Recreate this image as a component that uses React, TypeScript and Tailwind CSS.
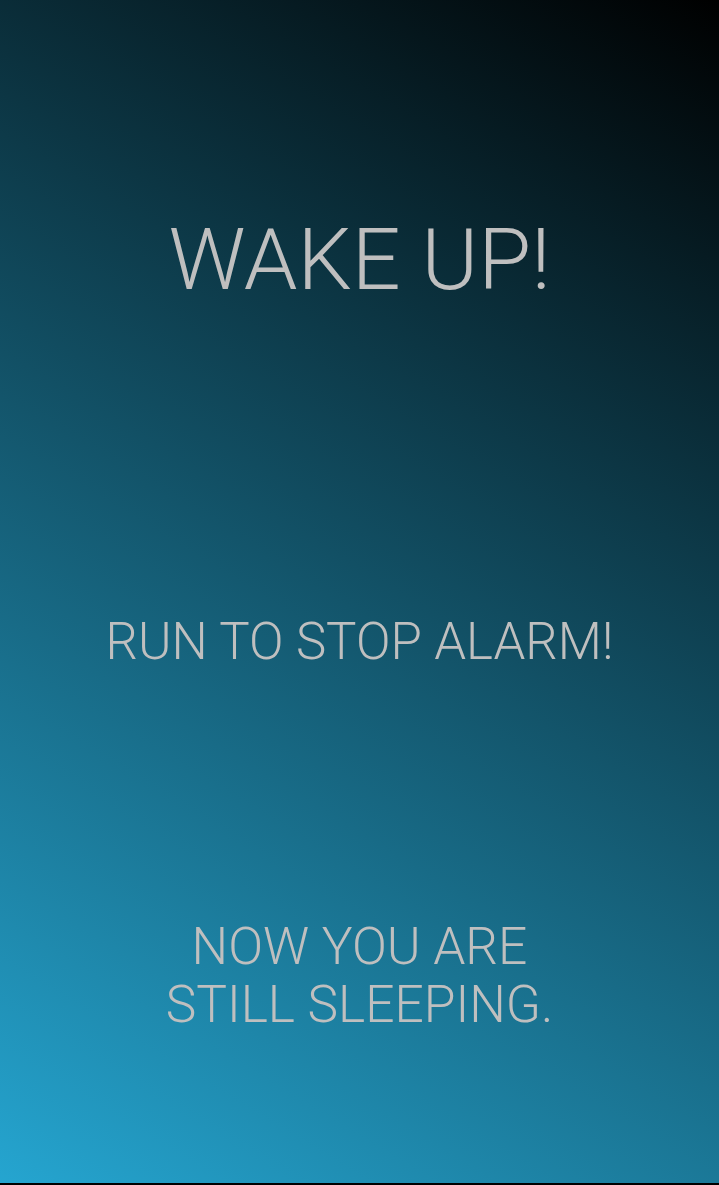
export default function App() {
  return (
    <div className="h-[1185px] w-full bg-black">
      <div
        className="flex h-[1183px] w-full flex-col items-center bg-[linear-gradient(31.25deg,#25a5d0_0%,#000_100%)] pt-[217px] text-center font-light text-[#bfbfbf]"
        style={{ fontFamily: 'Roboto, "Liberation Sans", sans-serif' }}
      >
        <h1 className="text-[86px] leading-none font-light">WAKE UP!</h1>
        <p className="mt-[313px] text-[51px] leading-none font-light">RUN TO STOP ALARM!</p>
        <p className="mt-[251px] text-[51.5px] leading-[58px] font-light">
          NOW YOU ARE
          <br />
          STILL SLEEPING.
        </p>
      </div>
    </div>
  );
}
